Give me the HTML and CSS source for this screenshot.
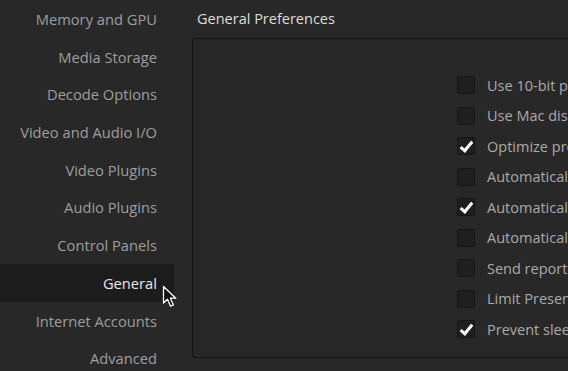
FILE: index.html
```html
<!DOCTYPE html>
<html>

<head>
    <title>Preferences</title>
    <link rel="stylesheet" href="styles.css">
</head>

<body>
    <div class="window">
        <ul class="sidebar">
            <li class="item">Memory and GPU</li>
            <li class="item">Media Storage</li>
            <li class="item">Decode Options</li>
            <li class="item">Video and Audio I/O</li>
            <li class="item">Video Plugins</li>
            <li class="item">Audio Plugins</li>
            <li class="item">Control Panels</li>
            <li class="item active">General
                <svg class="cursor" width="16" height="24" viewBox="0 0 16 24">
                    <path d="M1.5 1.5 L1.5 18 L5.5 14.2 L8.6 21.2 L11.4 20 L8.4 13.2 L13.8 13.2 Z" fill="#111" stroke="#fff" stroke-width="1.3" stroke-linejoin="round"/>
                </svg>
            </li>
            <li class="item">Internet Accounts</li>
            <li class="item">Advanced</li>
        </ul>

        <div class="main">
            <h2 class="title">General Preferences</h2>
            <div class="panel">
                <ul class="options">
                    <li class="option"><span class="box"></span>Use 10-bit precision video displays if available</li>
                    <li class="option"><span class="box"></span>Use Mac display color profiles for viewers</li>
                    <li class="option"><span class="box checked"></span>Optimize proxy media on demand</li>
                    <li class="option"><span class="box"></span>Automatically display HDR metadata</li>
                    <li class="option"><span class="box checked"></span>Automatically check for updates</li>
                    <li class="option"><span class="box"></span>Automatically tag rendered clips</li>
                    <li class="option"><span class="box"></span>Send reports of unexpected shutdown</li>
                    <li class="option"><span class="box"></span>Limit Presentation Mode refresh</li>
                    <li class="option"><span class="box checked"></span>Prevent sleep while rendering</li>
                </ul>
            </div>
        </div>
    </div>
</body>
</html>
```

FILE: styles.css
```css
html, body {
    margin: 0;
    height: 100%;
    overflow: hidden;
}

body {
    background-color: #282828;
    font-family: 'Open Sans', 'DejaVu Sans', sans-serif;
}

.window {
    display: flex;
    height: 371px;
}

.sidebar {
    list-style-type: none;
    margin: 0;
    padding: 0;
    width: 174px;
    flex: none;
}

.item {
    position: relative;
    height: 37.7px;
    line-height: 38.5px;
    padding-right: 17px;
    text-align: right;
    font-size: 14.7px;
    color: #9e9e9e;
    white-space: nowrap;
}

.item.active {
    background-color: #1c1c1c;
    color: #e8e8e8;
}

.cursor {
    position: absolute;
    left: 162px;
    top: 21px;
}

.main {
    padding-left: 18px;
    flex: none;
}

.title {
    margin: 0;
    height: 38px;
    line-height: 37px;
    font-size: 14.5px;
    font-weight: normal;
    color: #dedede;
    padding-left: 5px;
}

.panel {
    width: 420px;
    height: 318px;
    border: 1px solid #121212;
    border-radius: 3px;
    background-color: #282828;
}

.options {
    list-style-type: none;
    margin: 0;
    padding: 31px 0 0 264px;
}

.option {
    display: flex;
    align-items: center;
    gap: 12px;
    height: 30.5px;
    font-size: 14.5px;
    color: #aaaaaa;
    white-space: nowrap;
}

.box {
    position: relative;
    width: 16px;
    height: 16px;
    border: 1px solid #151515;
    border-radius: 2px;
    background-color: #1f1f1f;
    flex: none;
}

.box.checked::after {
    content: "";
    position: absolute;
    left: 5px;
    top: 1px;
    width: 4px;
    height: 10px;
    border: solid #ffffff;
    border-width: 0 3px 3px 0;
    transform: rotate(40deg);
}
```
